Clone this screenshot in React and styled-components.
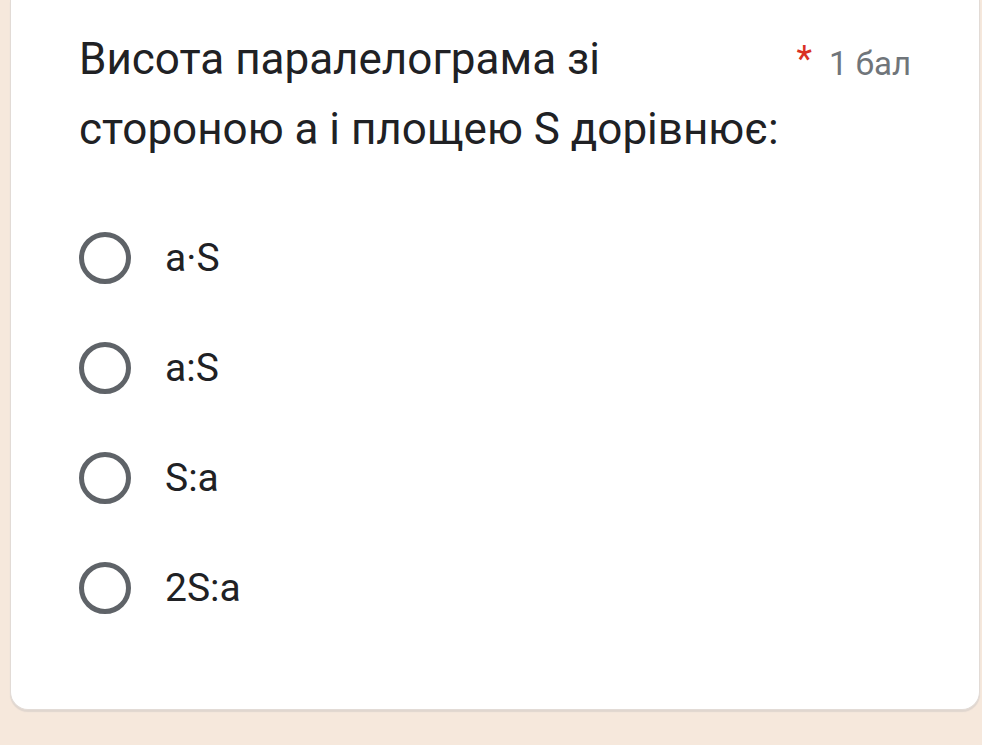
import React from 'react'
import styled, { createGlobalStyle } from 'styled-components'

const options = ['a·S', 'a:S', 'S:a', '2S:a']

const App = () => {
  return (
    <Page>
      <GlobalStyle />
      <Card>
        <Header>
          <Question>Висота паралелограма зі стороною a і площею S дорівнює:</Question>
          <Points>
            <Star>*</Star>
            <span>1 бал</span>
          </Points>
        </Header>

        <Options>
          {options.map((o) => (
            <Option key={o}>
              <Radio />
              <Label>{o}</Label>
            </Option>
          ))}
        </Options>
      </Card>
    </Page>
  )
}

export default App

const GlobalStyle = createGlobalStyle`
  body {
    margin: 0;
    background: #f6e8dc;
    font-family: Roboto, "Noto Sans", sans-serif;
  }
`

const Page = styled.div`
  width: 982px;
  height: 745px;
  overflow: hidden;
  padding: 0 2px 0 10px;
  box-sizing: border-box;
`

const Card = styled.div`
  background: #fff;
  height: 710px;
  box-sizing: border-box;
  border-radius: 0 0 18px 18px;
  border: 1px solid #e2dbd6;
  border-top: none;
  box-shadow: 0 2px 1px #e0d6cf;
  padding: 24px 68px 0 68px;
`

const Header = styled.div`
  display: flex;
  justify-content: space-between;
  align-items: flex-start;
`

const Question = styled.div`
  width: 706px;
  font-size: 44px;
  line-height: 70px;
  color: #202124;
`

const Points = styled.div`
  display: flex;
  align-items: flex-start;
  gap: 17px;
  font-size: 33px;
  color: #70757a;
  padding-top: 20px;
  white-space: nowrap;
`

const Star = styled.span`
  color: #d93025;
  font-size: 36px;
  line-height: 36px;
  margin-top: -3px;
`

const Options = styled.div`
  display: flex;
  flex-direction: column;
  gap: 58px;
  margin-top: 68px;
`

const Option = styled.div`
  display: flex;
  align-items: center;
  gap: 34px;
`

const Radio = styled.div`
  width: 52px;
  height: 52px;
  box-sizing: border-box;
  border: 5px solid #5f6368;
  border-radius: 50%;
`

const Label = styled.span`
  font-size: 39px;
  color: #202124;
`
